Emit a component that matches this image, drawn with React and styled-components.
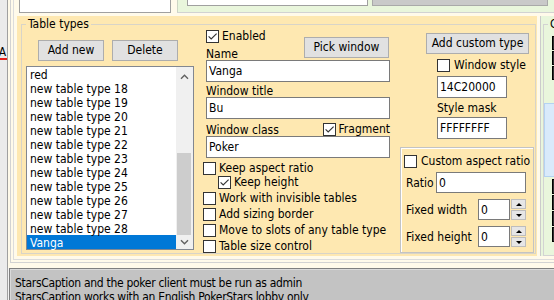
import React from "react";
import styled, { createGlobalStyle } from "styled-components";

const Global = createGlobalStyle`
  html, body { margin: 0; padding: 0; }
  body {
    width: 554px; height: 300px; overflow: hidden;
    background: #fffaea;
    font-family: "DejaVu Sans Condensed", "DejaVu Sans", sans-serif;
    font-size: 12px; color: #000;
  }
  #root { width: 554px; height: 300px; }
`;

const Window = styled.div`
  display: flex; width: 554px; height: 300px; overflow: hidden;
`;
const LeftStrip = styled.div`
  flex: 0 0 7px; background: #ebebeb; border-right: 1px solid #a0a0a0; overflow: hidden;
`;
const ColorGlyph = styled.div`
  margin: 46px 0 0 -2px; width: 9px; line-height: 12px; text-align: center;
  border-bottom: 2px solid #e3211b;
`;
const Main = styled.div`
  flex: 1; min-width: 0; display: flex; flex-direction: column; background: #f3f3f3;
`;
const Workspace = styled.div`
  flex: none; height: 268px; box-sizing: border-box; padding: 0 0 5px 2px; background: #fffaea;
`;
const Frame = styled.div`
  height: 100%; box-sizing: border-box;
  border-left: 1px solid ${(p) => p.$line}; border-bottom: 1px solid ${(p) => p.$line};
  padding: 0 0 ${(p) => p.$pb}px ${(p) => p.$pl}px;
  display: flex; flex-direction: column;
`;
const TopStrip = styled.div` display: flex; height: 13px; flex: none; `;
const TopList = styled.div`
  margin-left: 2px; width: 152px; height: 13px; box-sizing: border-box;
  background: #fff; border: 1px solid #a0a0a0; border-top: none;
`;
const TopGreen = styled.div`
  margin-left: 6px; flex: 1; height: 13px; box-sizing: border-box; background: #e9f6dc;
  border-left: 1px solid #cdd5c4; border-bottom: 1px solid #d2d2d2;
  display: flex; align-items: flex-start; padding-left: 9px;
`;
const TopWhite = styled.div`
  width: 181px; height: 6px; box-sizing: border-box; background: #fff;
  border: 1px solid #a0a0a0; border-top: none;
`;
const TopGray = styled.div`
  margin-left: 4px; width: 176px; height: 6px; box-sizing: border-box; background: #c9c9c9;
  border: 1px solid #a9a9a9; border-top: none;
`;
const MainRow = styled.div` display: flex; margin-top: 3px; height: 240px; flex: none; `;
const BeigePanel = styled.div`
  width: 520px; flex: none; box-sizing: border-box; background: #fee8b1;
  padding: 2px 1px 2px 4px; display: flex;
`;
const GroupBox = styled.fieldset`
  margin: 0; padding: 0 0 0 4px; flex: 1; min-width: 0;
  border: 1px solid #d8d4c8; display: flex; align-items: flex-start;
`;
const Legend = styled.legend`
  padding: 0 2px; line-height: 12px; margin-left: ${(p) => p.$ml || 0}px; white-space: nowrap;
`;
const Column = styled.div`
  flex: none; width: ${(p) => p.$w}px; margin: ${(p) => p.$mt || 0}px 0 0 ${(p) => p.$ml || 0}px;
  display: flex; flex-direction: column;
`;
const ButtonRow = styled.div` display: flex; gap: 8px; padding-left: 12px; `;
const PushButton = styled.button`
  width: ${(p) => p.$w}px; height: 21px; flex: none; box-sizing: border-box;
  margin: ${(p) => p.$m || "0"};
  background: #e1e1e1; border: 1px solid #adadad; border-radius: 0; padding: 0;
  font: inherit; color: #000; line-height: 19px; white-space: nowrap;
`;
const ListBox = styled.div`
  margin-top: 5px; height: 184px; box-sizing: border-box; border: 1px solid #828790;
  background: #fff; display: flex;
`;
const ListItems = styled.div` flex: 1; min-width: 0; `;
const ListItem = styled.div`
  height: 14px; box-sizing: border-box; padding: 2px 0 0 3px; line-height: 12px; white-space: nowrap;
  background: ${(p) => (p.$selected ? "#0078d7" : "transparent")};
  color: ${(p) => (p.$selected ? "#fff" : "#000")};
`;
const ScrollBar = styled.div`
  width: 17px; flex: none; background: #f0f0f0; display: flex; flex-direction: column;
`;
const ScrollArrow = styled.div`
  height: ${(p) => p.$h}px; flex: none; display: flex; align-items: center; justify-content: center;
`;
const ScrollTrack = styled.div` flex: 1; display: flex; flex-direction: column; justify-content: flex-end; `;
const ScrollThumb = styled.div` height: 82px; margin: 0 2px 0 1px; background: #cdcdcd; `;

const HeaderRow = styled.div`
  display: flex; justify-content: space-between; align-items: flex-start; padding-left: 3px;
`;
const Stack = styled.div` display: flex; flex-direction: column; `;
const FieldLabel = styled.div`
  line-height: 11px; padding-top: 1px; white-space: nowrap;
  margin: ${(p) => p.$mt || 0}px 0 0 ${(p) => p.$ml || 0}px;
`;
const TextInput = styled.div`
  flex: none; box-sizing: border-box; width: ${(p) => p.$w}px; height: ${(p) => p.$h || 22}px;
  margin: ${(p) => p.$mt || 0}px 0 0 ${(p) => p.$ml || 0}px;
  border: 1px solid #7a7a7a; background: #fff; padding: 0 2px;
  display: flex; align-items: center; white-space: nowrap; overflow: hidden;
`;
const ClassRow = styled.div`
  display: flex; justify-content: space-between; align-items: flex-end;
  margin-top: 4px; padding-left: 3px; height: 13px;
`;
const CheckRow = styled.div`
  display: flex; align-items: flex-start; height: 13px; flex: none;
  gap: ${(p) => (p.$gap == null ? 3 : p.$gap)}px;
  margin: ${(p) => p.$mt || 0}px 0 0 ${(p) => p.$ml || 0}px;
`;
const Box = styled.span`
  width: 13px; height: 13px; box-sizing: border-box; flex: none;
  border: 1px solid #333; background: #fff;
  display: flex; align-items: center; justify-content: center;
`;
const CheckText = styled.span` line-height: 12px; white-space: nowrap; `;

const CustomBox = styled.div`
  margin-top: 8px; height: 106px; box-sizing: border-box;
  border: 1px solid #c3c3c3; box-shadow: inset 1px 1px 0 #fff;
  padding: 7px 0 0 3px; display: flex; flex-direction: column;
`;
const SpinRow = styled.div`
  display: flex; align-items: center; height: 21px; padding-left: 2px;
  margin-top: ${(p) => p.$mt}px;
`;
const RowLabel = styled.span`
  width: ${(p) => p.$w}px; flex: none; line-height: 12px; white-space: nowrap;
`;
const Spinner = styled.div`
  width: 15px; height: 21px; margin-left: 1px; flex: none;
  display: flex; flex-direction: column; gap: 1px;
`;
const SpinButton = styled.div`
  flex: 1; box-sizing: border-box; background: #e6e6e6; border: 1px solid #bdbdbd;
  display: flex; align-items: center; justify-content: center;
  &::after {
    content: ""; width: 0; height: 0;
    border-left: 3px solid transparent; border-right: 3px solid transparent;
    ${(p) => (p.$down ? "border-top: 3px solid #000;" : "border-bottom: 3px solid #000;")}
  }
`;

const GreenPanel = styled.div`
  margin-left: 3px; flex: 1; min-width: 0; box-sizing: border-box; background: #e9f6dc;
  border-left: 1px solid #cbcbcb; overflow: hidden; padding: 2px 0 0 2px; display: flex;
`;
const GreenGroup = styled.fieldset`
  margin: 0; padding: 0; flex: 1; min-width: 0; border: 1px solid #d3d3d3; border-right: none;
  display: flex; flex-direction: column; align-items: flex-start;
`;
const Swatch = styled.div`
  flex: none; width: 20px; height: ${(p) => p.$h}px; box-sizing: border-box;
  margin: ${(p) => p.$mt}px 0 0 8px;
  border: 1px solid #000; background: #303030;
`;
const BlueBox = styled.div`
  margin-top: 23px; width: 20px; height: 74px; box-sizing: border-box;
  background: #d9eafb; border: 1px solid #b4d3f2;
`;

const StatusBar = styled.div`
  flex: 1; margin-left: 1px; background: #c3c3c3;
  border-top: 1px solid #7f7f7f; border-left: 1px solid #7f7f7f;
  box-shadow: inset 1px 1px 0 #dadada;
  padding: 7px 0 0 5px; line-height: 14px; letter-spacing: -0.3px;
  white-space: nowrap; overflow: hidden;
`;

function Check({ checked }) {
  return (
    <Box>
      {checked && (
        <svg width="11" height="11" viewBox="0 0 11 11">
          <path d="M1.6 5.4 L4.2 8 L9.6 2.6" fill="none" stroke="#333" strokeWidth="1.15" />
        </svg>
      )}
    </Box>
  );
}

function CheckBox({ label, checked, mt, ml, gap }) {
  return (
    <CheckRow $mt={mt} $ml={ml} $gap={gap}>
      <Check checked={checked} />
      {label && <CheckText>{label}</CheckText>}
    </CheckRow>
  );
}

function Chevron({ down }) {
  return (
    <svg width="9" height="6" viewBox="0 0 9 6">
      <path
        d={down ? "M1 1.2 L4.5 4.7 L8 1.2" : "M1 4.8 L4.5 1.3 L8 4.8"}
        fill="none" stroke="#606060" strokeWidth="1.4"
      />
    </svg>
  );
}

const items = ["red"];
for (let i = 18; i <= 28; i++) items.push("new table type " + i);
items.push("Vanga");

export default function App() {
  return (
    <>
      <Global />
      <Window>
        <LeftStrip>
          <ColorGlyph>A</ColorGlyph>
        </LeftStrip>
        <Main>
          <Workspace>
            <Frame $line="#d2d2d2" $pb={2} $pl={2}>
              <Frame $line="#dcdcdc" $pb={0} $pl={3}>
                <TopStrip>
                  <TopList />
                  <TopGreen>
                    <TopWhite />
                    <TopGray />
                  </TopGreen>
                </TopStrip>
                <MainRow>
                  <BeigePanel>
                    <GroupBox>
                      <Legend>Table types</Legend>
                      <Column $w={168} $mt={10}>
                        <ButtonRow>
                          <PushButton $w={66}>Add new</PushButton>
                          <PushButton $w={66}>Delete</PushButton>
                        </ButtonRow>
                        <ListBox>
                          <ListItems>
                            {items.map((t) => (
                              <ListItem key={t} $selected={t === "Vanga"}>{t}</ListItem>
                            ))}
                          </ListItems>
                          <ScrollBar>
                            <ScrollArrow $h={20}><Chevron /></ScrollArrow>
                            <ScrollTrack><ScrollThumb /></ScrollTrack>
                            <ScrollArrow $h={14}><Chevron down /></ScrollArrow>
                          </ScrollBar>
                        </ListBox>
                      </Column>

                      <Column $w={187} $ml={9}>
                        <HeaderRow>
                          <Stack>
                            <CheckBox label="Enabled" checked />
                            <FieldLabel $mt={5}>Name</FieldLabel>
                          </Stack>
                          <PushButton $w={85} $m="7px 1px 0 0">Pick window</PushButton>
                        </HeaderRow>
                        <TextInput $w={184} $ml={3}>Vanga</TextInput>
                        <FieldLabel $mt={3} $ml={3}>Window title</FieldLabel>
                        <TextInput $w={184} $ml={3}>Bu</TextInput>
                        <ClassRow>
                          <FieldLabel>Window class</FieldLabel>
                          <CheckBox label="Fragment" checked />
                        </ClassRow>
                        <TextInput $w={184} $ml={3}>Poker</TextInput>
                        <CheckBox label="Keep aspect ratio" mt={4} />
                        <CheckBox label="Keep height" checked mt={1} ml={15} />
                        <CheckBox label="Work with invisible tables" mt={3} />
                        <CheckBox label="Add sizing border" mt={3} />
                        <CheckBox label="Move to slots of any table type" mt={3} />
                        <CheckBox label="Table size control" mt={3} />
                      </Column>

                      <Column $w={134} $ml={10}>
                        <PushButton $w={103} $m="3px 0 0 26px">Add custom type</PushButton>
                        <CheckBox label="Window style" mt={5} ml={37} gap={4} />
                        <TextInput $w={70} $mt={4} $ml={37}>14C20000</TextInput>
                        <FieldLabel $mt={4} $ml={37}>Style mask</FieldLabel>
                        <TextInput $w={70} $mt={3} $ml={37}>FFFFFFFF</TextInput>
                        <CustomBox>
                          <CheckBox label="Custom aspect ratio" gap={4} />
                          <SpinRow $mt={4}>
                            <RowLabel $w={30}>Ratio</RowLabel>
                            <TextInput $w={90} $h={21}>0</TextInput>
                          </SpinRow>
                          <SpinRow $mt={6}>
                            <RowLabel $w={72}>Fixed width</RowLabel>
                            <TextInput $w={32} $h={21}>0</TextInput>
                            <Spinner><SpinButton /><SpinButton $down /></Spinner>
                          </SpinRow>
                          <SpinRow $mt={6}>
                            <RowLabel $w={72}>Fixed height</RowLabel>
                            <TextInput $w={32} $h={21}>0</TextInput>
                            <Spinner><SpinButton /><SpinButton $down /></Spinner>
                          </SpinRow>
                        </CustomBox>
                      </Column>
                    </GroupBox>
                  </BeigePanel>
                  <GreenPanel>
                    <GreenGroup>
                      <Legend $ml={4}>C</Legend>
                      <Swatch $h={14} $mt={6} />
                      <Swatch $h={14} $mt={1} />
                      <Swatch $h={14} $mt={1} />
                      <BlueBox />
                      <Swatch $h={15} $mt={2} />
                      <Swatch $h={15} $mt={1} />
                      <Swatch $h={15} $mt={1} />
                      <Swatch $h={15} $mt={1} />
                    </GreenGroup>
                  </GreenPanel>
                </MainRow>
              </Frame>
            </Frame>
          </Workspace>
          <StatusBar>
            StarsCaption and the poker client must be run as admin
            <br />
            StarsCaption works with an English PokerStars lobby only
          </StatusBar>
        </Main>
      </Window>
    </>
  );
}
